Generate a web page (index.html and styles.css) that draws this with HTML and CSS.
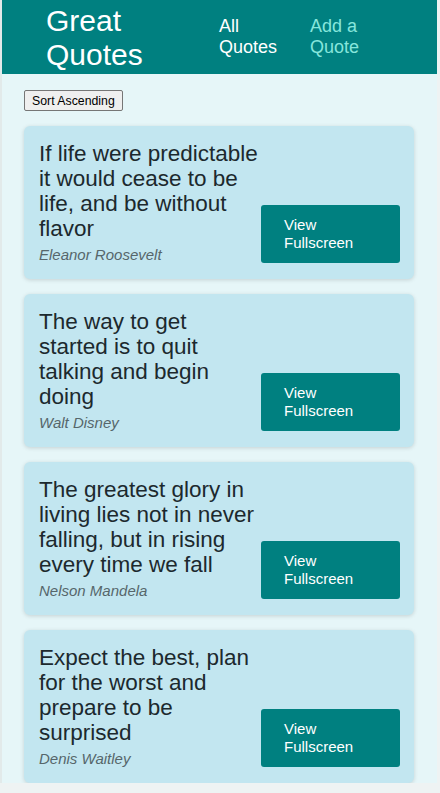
FILE: index.html
```html
<!DOCTYPE html>
<html lang="en">
<head>
<meta charset="utf-8">
<title>Great Quotes</title>
<link rel="stylesheet" href="styles.css">
</head>
<body>
<div class="app">
  <header class="header">
    <div class="logo">Great Quotes</div>
    <nav>
      <ul class="nav-list">
        <li><a class="nav-link" href="#">All Quotes</a></li>
        <li><a class="nav-link active" href="#">Add a Quote</a></li>
      </ul>
    </nav>
  </header>
  <main class="main">
    <div class="sorting">
      <button class="sort-btn" type="button">Sort Ascending</button>
    </div>
    <ul class="quote-list">
      <li class="quote-card">
        <figure class="quote-body">
          <blockquote class="quote-text">If life were predictable it would cease to be life, and be without flavor</blockquote>
          <figcaption class="quote-author">Eleanor Roosevelt</figcaption>
        </figure>
        <a class="view-btn" href="#">View Fullscreen</a>
      </li>
      <li class="quote-card">
        <figure class="quote-body">
          <blockquote class="quote-text">The way to get started is to quit talking and begin doing</blockquote>
          <figcaption class="quote-author">Walt Disney</figcaption>
        </figure>
        <a class="view-btn" href="#">View Fullscreen</a>
      </li>
      <li class="quote-card">
        <figure class="quote-body">
          <blockquote class="quote-text">The greatest glory in living lies not in never falling, but in rising every time we fall</blockquote>
          <figcaption class="quote-author">Nelson Mandela</figcaption>
        </figure>
        <a class="view-btn" href="#">View Fullscreen</a>
      </li>
      <li class="quote-card">
        <figure class="quote-body">
          <blockquote class="quote-text">Expect the best, plan for the worst and prepare to be surprised</blockquote>
          <figcaption class="quote-author">Denis Waitley</figcaption>
        </figure>
        <a class="view-btn" href="#">View Fullscreen</a>
      </li>
    </ul>
  </main>
</div>
</body>
</html>
```
FILE: styles.css
```css
* {
  box-sizing: border-box;
}

html, body {
  margin: 0;
  padding: 0;
}

body {
  background: #eef3f3;
  font-family: "Liberation Sans", Arial, sans-serif;
  border-left: 2px solid #e2eaea;
}

.app {
  width: 435px;
  background: #e6f6f8;
}

.header {
  height: 74px;
  background: #008080;
  display: flex;
  align-items: center;
  padding-left: 44px;
}

.logo {
  width: 173px;
  flex-shrink: 0;
  color: #ffffff;
  font-size: 30px;
  line-height: normal;
  padding-top: 1px;
}

.nav-list {
  list-style: none;
  margin: 0;
  padding: 0;
  display: flex;
  gap: 27px;
}

.nav-list li {
  width: 64px;
}

.nav-link {
  color: #ffffff;
  text-decoration: none;
  font-size: 18px;
  line-height: normal;
}

.nav-link.active {
  color: #86e6dc;
}

.main {
  padding-top: 16px;
}

.sorting {
  margin-left: 22px;
}

.sort-btn {
  font-family: "Liberation Sans", Arial, sans-serif;
  font-size: 12.3px;
  height: 21px;
  padding: 1px 7px;
  background: #efefef;
  color: #000000;
  border: 1px solid #767676;
  border-radius: 2px;
}

.quote-list {
  list-style: none;
  margin: 15px 0 0 0;
  padding: 0;
}

.quote-card {
  width: 390px;
  margin: 0 auto 15px 22px;
  background: #c2e6f0;
  border-radius: 6px;
  box-shadow: 0 1px 4px rgba(0, 0, 0, 0.15);
  display: flex;
  align-items: flex-end;
  padding: 15px 14px 16px 15px;
}

.quote-card:last-child {
  margin-bottom: 0;
}

.quote-body {
  flex: 1;
  margin: 0;
}

.quote-text {
  margin: 0;
  font-size: 22.5px;
  line-height: 25px;
  color: #1c292e;
}

.quote-author {
  margin-top: 5px;
  font-size: 15px;
  line-height: 17px;
  font-style: italic;
  color: #56666b;
}

.view-btn {
  flex-shrink: 0;
  width: 139px;
  padding: 11px 23px;
  background: #008080;
  color: #ffffff;
  text-decoration: none;
  font-size: 15px;
  line-height: 18px;
  border-radius: 3px;
}
```
